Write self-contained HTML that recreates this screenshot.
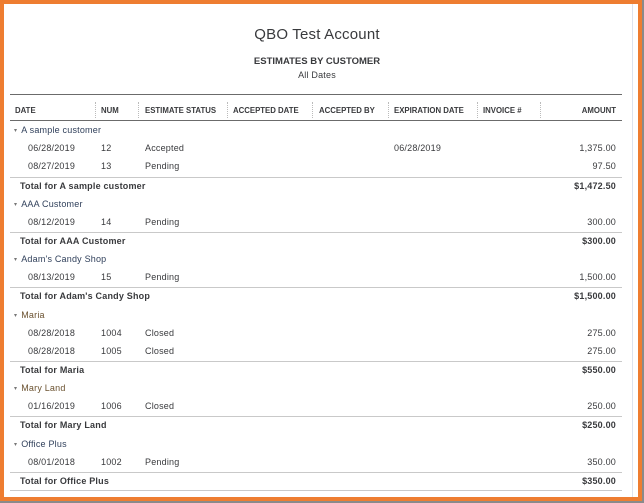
<!DOCTYPE html>
<html><head><meta charset="utf-8"><style>
*{margin:0;padding:0;box-sizing:border-box}
body{width:644px;height:503px;background:#8a8a8a;position:relative;overflow:hidden;font-family:"Liberation Sans",sans-serif;color:#393a3d}
#frame{position:absolute;left:0;top:0;width:642px;height:501px;border:4px solid #ee7d31;background:#fff}
#vline{position:absolute;left:632px;top:4px;width:1px;height:493px;background:#dde3ee}
.t{position:absolute;white-space:nowrap;font-size:9px;line-height:11px;letter-spacing:0.2px}
.r{text-align:right}
.b{font-weight:bold}
.h{font-weight:bold;font-size:7.8px;letter-spacing:0}
.g{color:#2f3f5a}
.m{color:#6b5230}
.c{font-size:6px;color:#777;margin-right:4px;vertical-align:1px}
.ln{position:absolute;left:10px;width:612px;height:1px;background:#c9c9c9}
.sep{position:absolute;top:102px;height:16px;border-left:1px dotted #bbb}
</style></head><body>
<div id="frame"></div>
<div id="vline"></div>
<div class="t" style="left:0;width:634px;text-align:center;top:26px;font-size:15px;line-height:18px">QBO Test Account</div>
<div class="t b" style="left:0;width:634px;text-align:center;top:56px;font-size:9.5px;letter-spacing:0">ESTIMATES BY CUSTOMER</div>
<div class="t" style="left:0;width:634px;text-align:center;top:70px">All Dates</div>
<div class="ln" style="top:94px;background:#6b6b6b"></div>
<div class="ln" style="top:120px;background:#6b6b6b"></div>
<div class="sep" style="left:95px"></div><div class="sep" style="left:138px"></div><div class="sep" style="left:227px"></div><div class="sep" style="left:312px"></div><div class="sep" style="left:388px"></div><div class="sep" style="left:477px"></div><div class="sep" style="left:540px"></div>
<div class="t h" style="left:15px;top:105px">DATE</div>
<div class="t h" style="left:101px;top:105px">NUM</div>
<div class="t h" style="left:145px;top:105px">ESTIMATE STATUS</div>
<div class="t h" style="left:233px;top:105px">ACCEPTED DATE</div>
<div class="t h" style="left:319px;top:105px">ACCEPTED BY</div>
<div class="t h" style="left:394px;top:105px">EXPIRATION DATE</div>
<div class="t h" style="left:483px;top:105px">INVOICE #</div>
<div class="t h r" style="right:28px;top:105px">AMOUNT</div>

<div class="t g" style="left:14px;top:125px"><span class="c">▾</span>A sample customer</div>
<div class="t" style="left:28px;top:143px">06/28/2019</div><div class="t" style="left:101px;top:143px">12</div><div class="t" style="left:145px;top:143px">Accepted</div><div class="t" style="left:394px;top:143px">06/28/2019</div><div class="t" style="right:28px;top:143px">1,375.00</div>
<div class="t" style="left:28px;top:161px">08/27/2019</div><div class="t" style="left:101px;top:161px">13</div><div class="t" style="left:145px;top:161px">Pending</div><div class="t" style="right:28px;top:161px">97.50</div>
<div class="ln" style="top:177px"></div>
<div class="t b" style="left:20px;top:181px">Total for A sample customer</div><div class="t b" style="right:28px;top:181px">$1,472.50</div>

<div class="t g" style="left:14px;top:199px"><span class="c">▾</span>AAA Customer</div>
<div class="t" style="left:28px;top:217px">08/12/2019</div><div class="t" style="left:101px;top:217px">14</div><div class="t" style="left:145px;top:217px">Pending</div><div class="t" style="right:28px;top:217px">300.00</div>
<div class="ln" style="top:232px"></div>
<div class="t b" style="left:20px;top:236px">Total for AAA Customer</div><div class="t b" style="right:28px;top:236px">$300.00</div>

<div class="t g" style="left:14px;top:254px"><span class="c">▾</span>Adam's Candy Shop</div>
<div class="t" style="left:28px;top:272px">08/13/2019</div><div class="t" style="left:101px;top:272px">15</div><div class="t" style="left:145px;top:272px">Pending</div><div class="t" style="right:28px;top:272px">1,500.00</div>
<div class="ln" style="top:287px"></div>
<div class="t b" style="left:20px;top:291px">Total for Adam's Candy Shop</div><div class="t b" style="right:28px;top:291px">$1,500.00</div>

<div class="t m" style="left:14px;top:310px"><span class="c">▾</span>Maria</div>
<div class="t" style="left:28px;top:328px">08/28/2018</div><div class="t" style="left:101px;top:328px">1004</div><div class="t" style="left:145px;top:328px">Closed</div><div class="t" style="right:28px;top:328px">275.00</div>
<div class="t" style="left:28px;top:346px">08/28/2018</div><div class="t" style="left:101px;top:346px">1005</div><div class="t" style="left:145px;top:346px">Closed</div><div class="t" style="right:28px;top:346px">275.00</div>
<div class="ln" style="top:361px"></div>
<div class="t b" style="left:20px;top:365px">Total for Maria</div><div class="t b" style="right:28px;top:365px">$550.00</div>

<div class="t m" style="left:14px;top:383px"><span class="c">▾</span>Mary Land</div>
<div class="t" style="left:28px;top:401px">01/16/2019</div><div class="t" style="left:101px;top:401px">1006</div><div class="t" style="left:145px;top:401px">Closed</div><div class="t" style="right:28px;top:401px">250.00</div>
<div class="ln" style="top:416px"></div>
<div class="t b" style="left:20px;top:420px">Total for Mary Land</div><div class="t b" style="right:28px;top:420px">$250.00</div>

<div class="t g" style="left:14px;top:439px"><span class="c">▾</span>Office Plus</div>
<div class="t" style="left:28px;top:457px">08/01/2018</div><div class="t" style="left:101px;top:457px">1002</div><div class="t" style="left:145px;top:457px">Pending</div><div class="t" style="right:28px;top:457px">350.00</div>
<div class="ln" style="top:472px"></div>
<div class="t b" style="left:20px;top:476px">Total for Office Plus</div><div class="t b" style="right:28px;top:476px">$350.00</div>
<div class="ln" style="top:490px"></div>
</body></html>
